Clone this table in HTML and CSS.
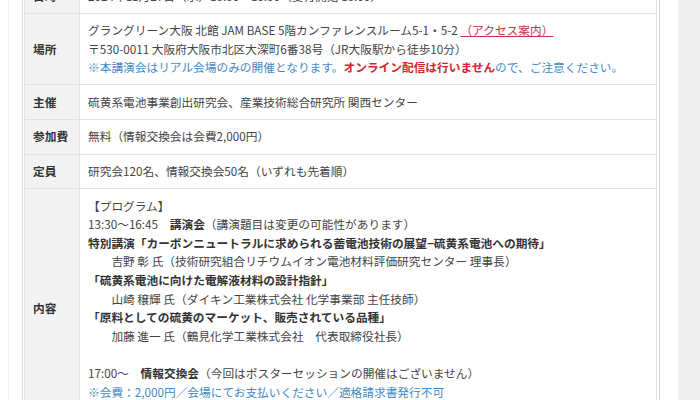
FILE: index.html
```html
<!DOCTYPE html>
<html lang="ja">
<head>
    <meta charset="UTF-8">
    <title>研究会のご案内</title>
    <link rel="stylesheet" href="styles.css">
</head>
<body>
    <div class="page">
        <div class="page-inner">
            <div class="entry-box">
                <table class="info-table">
                    <tr>
                        <th>日時</th>
                        <td>2024年11月27日（水）13:30～18:30（受付開始 13:00）</td>
                    </tr>
                    <tr>
                        <th>場所</th>
                        <td>
                            グラングリーン大阪 北館 JAM BASE 5階カンファレンスルーム5-1・5-2 <a href="#" class="access">（アクセス案内）</a><br>
                            〒530-0011 大阪府大阪市北区大深町6番38号（JR大阪駅から徒歩10分）<br>
                            <span class="note">※本講演会はリアル会場のみの開催となります。<strong class="alert">オンライン配信は行いません</strong>ので、ご注意ください。</span>
                        </td>
                    </tr>
                    <tr>
                        <th>主催</th>
                        <td>硫黄系電池事業創出研究会、産業技術総合研究所 関西センター</td>
                    </tr>
                    <tr>
                        <th>参加費</th>
                        <td>無料（情報交換会は会費2,000円）</td>
                    </tr>
                    <tr>
                        <th>定員</th>
                        <td>研究会120名、情報交換会50名（いずれも先着順）</td>
                    </tr>
                    <tr>
                        <th>内容</th>
                        <td>
                            【プログラム】<br>
                            13:30～16:45　<strong>講演会</strong>（講演題目は変更の可能性があります）<br>
                            <strong>特別講演「カーボンニュートラルに求められる蓄電池技術の展望−硫黄系電池への期待」</strong><br>
                            　　吉野 彰 氏（技術研究組合リチウムイオン電池材料評価研究センター 理事長）<br>
                            <strong>「硫黄系電池に向けた電解液材料の設計指針」</strong><br>
                            　　山崎 穣輝 氏（ダイキン工業株式会社 化学事業部 主任技師）<br>
                            <strong>「原料としての硫黄のマーケット、販売されている品種」</strong><br>
                            　　加藤 進一 氏（鶴見化学工業株式会社　代表取締役社長）<br>
                            <br>
                            17:00～　<strong>情報交換会</strong>（今回はポスターセッションの開催はございません）<br>
                            <span class="note">※会費：2,000円／会場にてお支払いください／適格請求書発行不可</span><br>
                            <span class="note">※当日は受付にて名刺を1枚頂戴いたします</span>
                        </td>
                    </tr>
                </table>
            </div>
        </div>
    </div>
    <div class="sidebar"></div>
</body>
</html>
```

FILE: styles.css
```css
* {
    box-sizing: border-box;
}
body {
    margin: 0;
    display: flex;
    min-height: 100vh;
    background: #fff;
    font-family: "Noto Sans CJK JP", "Noto Sans", sans-serif;
    font-size: 11.7px;
    line-height: 18.6px;
    color: #444;
    overflow: hidden;
}
.page {
    width: 678px;
    flex-shrink: 0;
    padding-left: 8px;
}
.page-inner {
    border-left: 1px solid #f0f0f0;
    padding-left: 13px;
    min-height: 100%;
}
.entry-box {
    width: 638px;
    margin-top: -22px;
    border-left: 1px solid #dcdcdc;
    border-right: 1px solid #dcdcdc;
    padding: 0 2px 0 1px;
}
.info-table {
    width: 100%;
    border-collapse: collapse;
    border: 1px solid #e0e0e0;
}
.info-table th,
.info-table td {
    border: 1px solid #e2e2e2;
    padding: 7.5px 8px;
    vertical-align: middle;
    text-align: left;
}
.info-table th {
    width: 55px;
    background: #f3f3f3;
    color: #333;
    font-weight: bold;
    white-space: nowrap;
}
.info-table td {
    white-space: nowrap;
}
.info-table strong {
    color: #333;
}
.access {
    color: #c92f49;
    text-decoration: underline;
}
.note {
    color: #3f8ac4;
}
.info-table .alert {
    color: #d3262c;
}
.sidebar {
    flex: 1;
    background: #efefef;
}
```
